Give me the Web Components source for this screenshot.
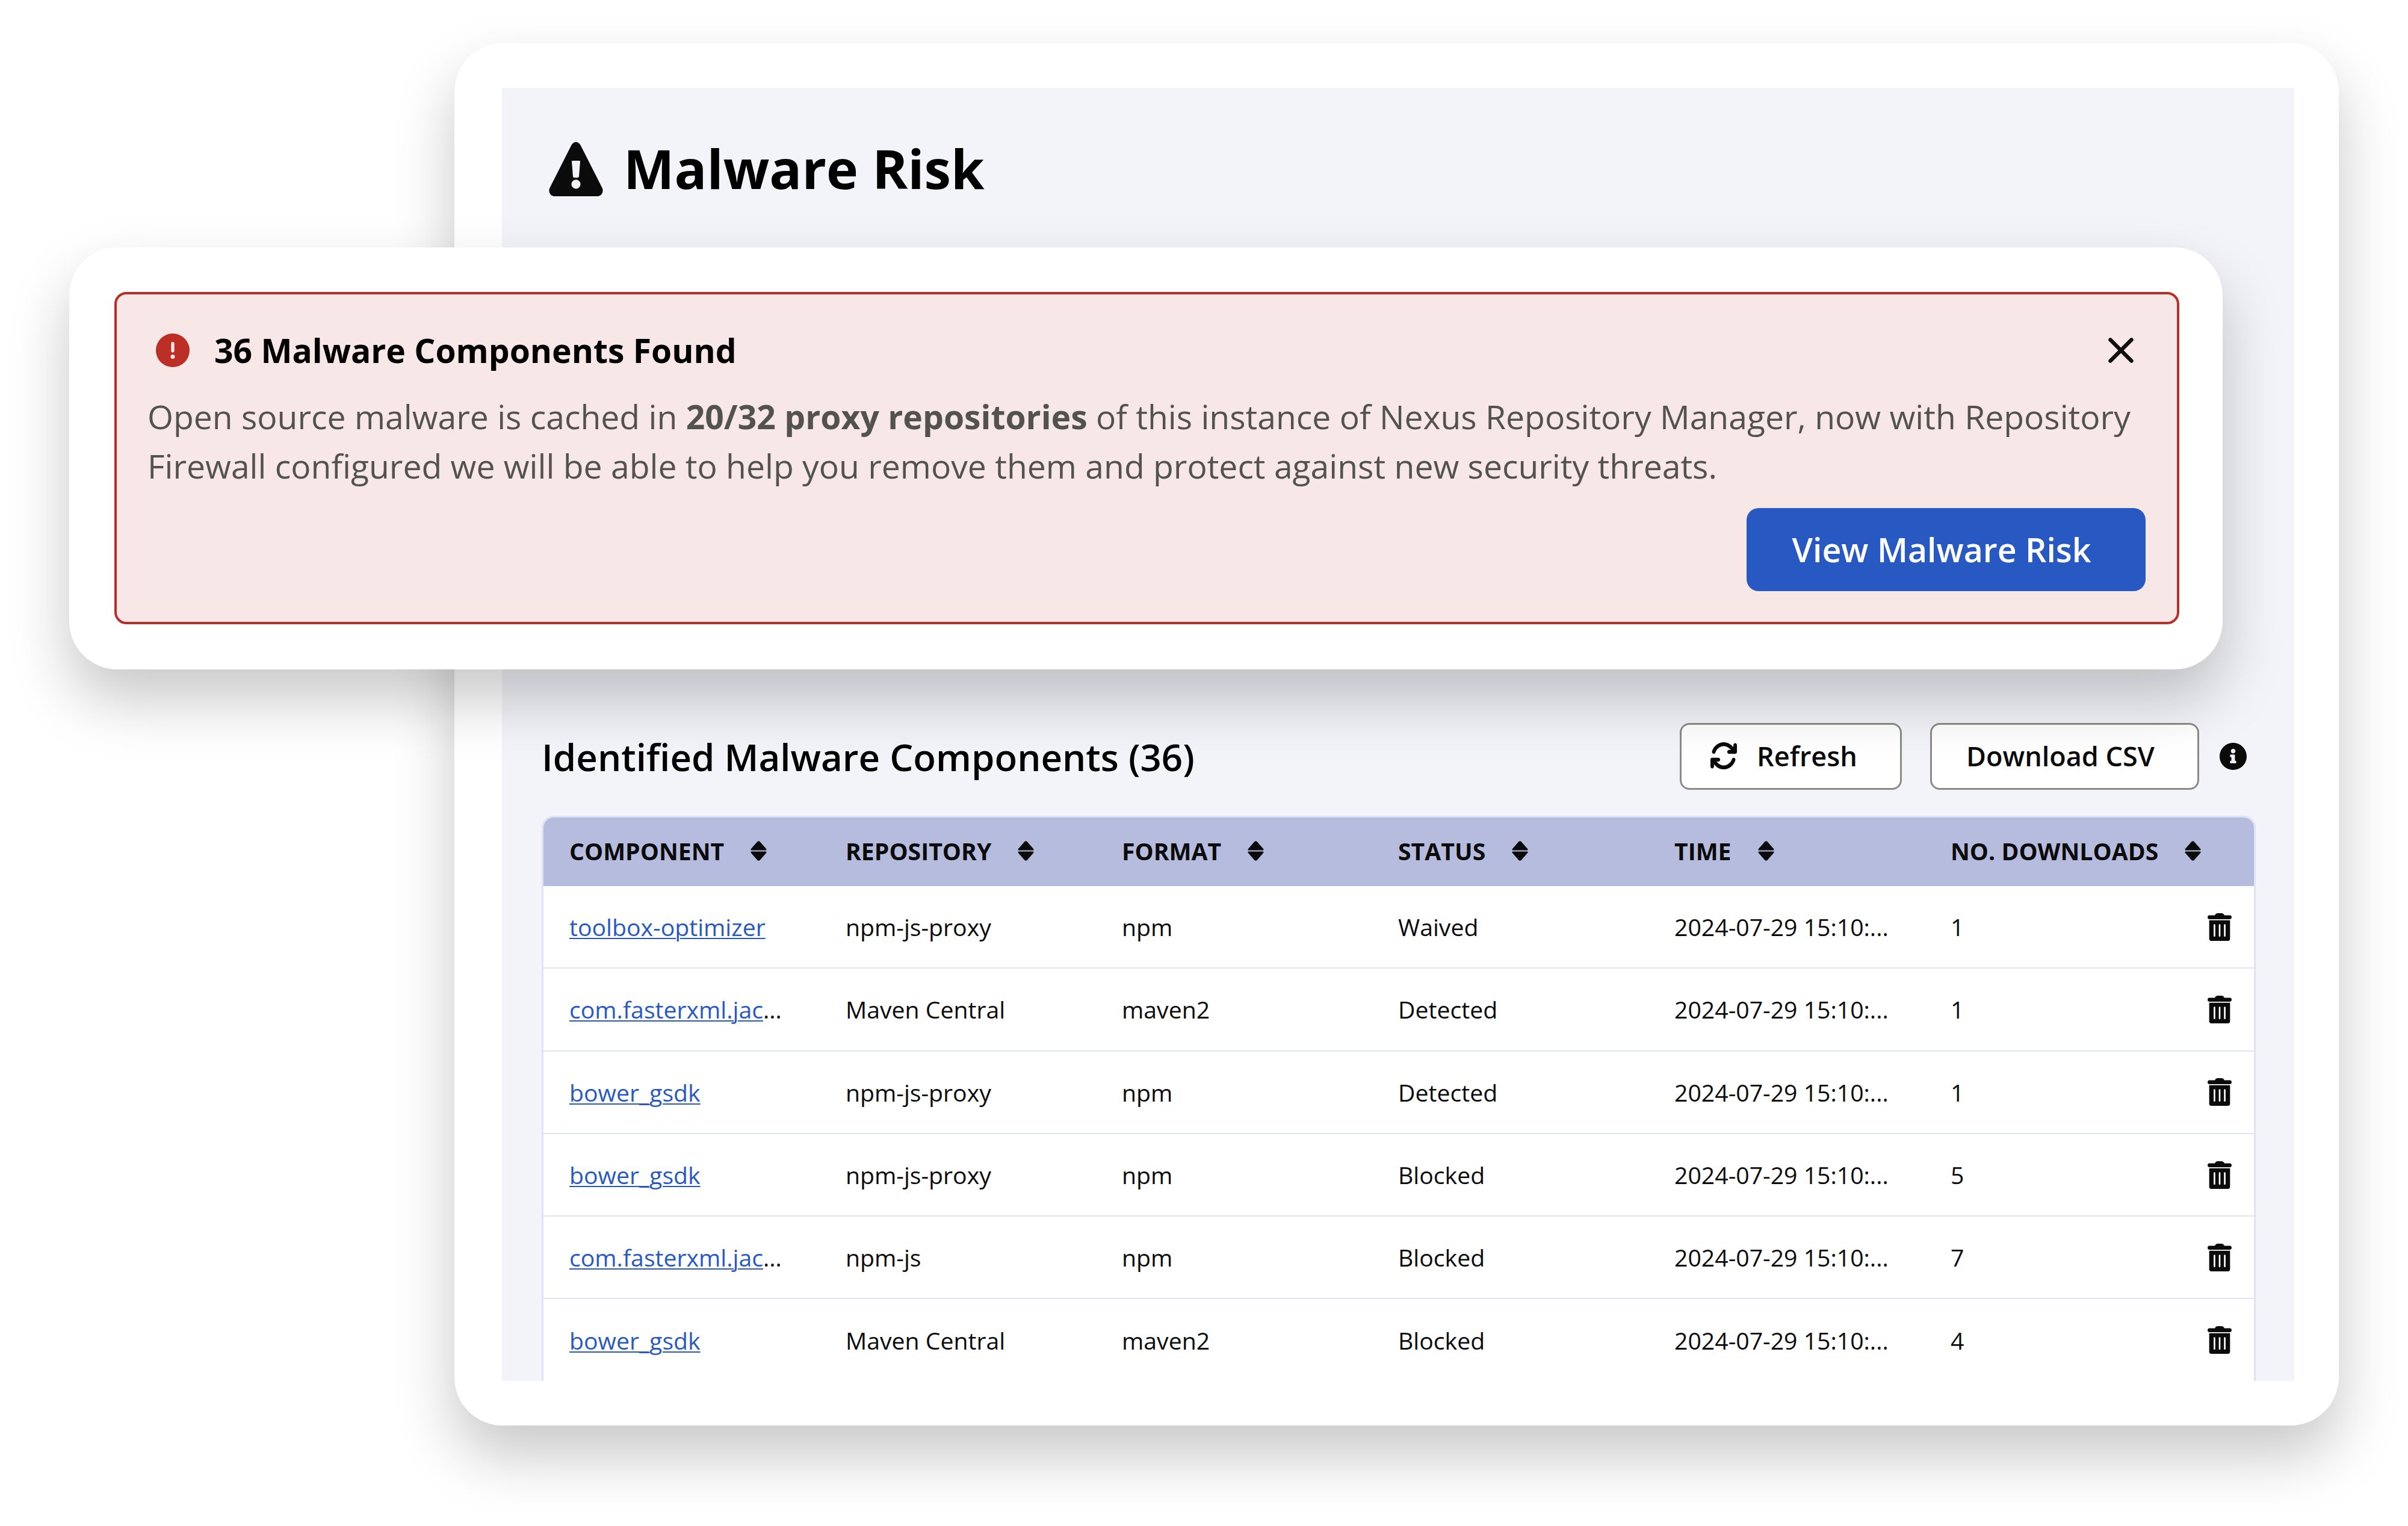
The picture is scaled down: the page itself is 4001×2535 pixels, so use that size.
<!DOCTYPE html>
<html>
<head>
<meta charset="utf-8">
<title>Malware Risk</title>
<style>
  html, body { margin: 0; padding: 0; background: #ffffff; }
  body { width: 4001px; height: 2535px; overflow: hidden; }
</style>
</head>
<body>
<malware-stage>
  <risk-card>
    <risk-title slot="title">Malware Risk</risk-title>
    <table-toolbar slot="toolbar" heading="Identified Malware Components (36)"></table-toolbar>
    <component-table slot="table"></component-table>
  </risk-card>
  <alert-card slot="overlay" heading="36 Malware Components Found" action="View Malware Risk">
    Open source malware is cached in <b>20/32 proxy repositories</b> of this instance of Nexus Repository Manager, now with Repository Firewall configured we will be able to help you remove them and protect against new security threats.
  </alert-card>
</malware-stage>

<script>
const ICONS = {
  warning: {
    box: "0 0 90 90",
    d: "M45 0C48 0 51 2 52.5 5L88.5 76C91.5 82 88 90 81 90H9C2 90-1.5 82 1.5 76L37.5 5C39 2 42 0 45 0ZM39 31H51Q52 31 52 32L50 57Q50 59 48 59H42Q40 59 40 57L38 32Q38 31 39 31ZM45 62.5a7.5 7.5 0 1 0 .01 0Z",
  },
  error: {
    box: "0 0 512 512",
    d: "M256 512A256 256 0 1 0 256 0a256 256 0 1 0 0 512zm0-384c13.3 0 24 10.7 24 24V264c0 13.3-10.7 24-24 24s-24-10.7-24-24V152c0-13.3 10.7-24 24-24zM224 352a32 32 0 1 1 64 0 32 32 0 1 1-64 0z",
  },
  info: {
    box: "8 8 496 496",
    d: "M256 8C119.043 8 8 119.083 8 256c0 136.997 111.043 248 248 248s248-111.003 248-248C504 119.083 392.957 8 256 8zm0 110c23.196 0 42 18.804 42 42s-18.804 42-42 42-42-18.804-42-42 18.804-42 42-42zm56 254c0 6.627-5.373 12-12 12h-88c-6.627 0-12-5.373-12-12v-24c0-6.627 5.373-12 12-12h12v-64h-12c-6.627 0-12-5.373-12-12v-24c0-6.627 5.373-12 12-12h64c6.627 0 12 5.373 12 12v100h12c6.627 0 12 5.373 12 12v24z",
  },
  refresh: {
    box: "16 32 480 448",
    d: "M105.1 202.6c7.7-21.8 20.2-42.3 37.8-59.8c62.5-62.5 163.8-62.5 226.3 0L386.3 160H352c-17.7 0-32 14.3-32 32s14.3 32 32 32H463.5c0 0 0 0 0 0h.4c17.7 0 32-14.3 32-32V80c0-17.7-14.3-32-32-32s-32 14.3-32 32v35.2L414.4 97.6c-87.5-87.5-229.3-87.5-316.8 0C73.2 122 55.6 150.7 44.8 181.4c-5.9 16.7 2.9 34.9 19.5 40.8s34.9-2.9 40.8-19.5zM39 289.3c-5 1.5-9.8 4.2-13.7 8.2c-4 4-6.7 8.8-8.1 14c-.3 1.2-.6 2.5-.8 3.8c-.3 1.7-.4 3.4-.4 5.1V432c0 17.7 14.3 32 32 32s32-14.3 32-32V396.9l17.6 17.5 0 0c87.5 87.4 229.3 87.4 316.7 0c24.4-24.4 42.1-53.1 52.9-83.7c5.9-16.7-2.9-34.9-19.5-40.8s-34.9 2.9-40.8 19.5c-7.7 21.8-20.2 42.3-37.8 59.8c-62.5 62.5-163.8 62.5-226.3 0l-.1-.1L125.6 352H160c17.7 0 32-14.3 32-32s-14.3-32-32-32H48.4c-1.6 0-3.2 .1-4.8 .3s-3.1 .5-4.6 1z",
  },
  trash: {
    box: "0 0 448 512",
    d: "M30 130H418V476C418 496 402 512 382 512H66C46 512 30 496 30 476ZM128 204c-8 0-15 7-15 15V420c0 8 7 15 15 15s15-7 15-15V219c0-8-7-15-15-15zm96 0c-8 0-15 7-15 15V420c0 8 7 15 15 15s15-7 15-15V219c0-8-7-15-15-15zm96 0c-8 0-15 7-15 15V420c0 8 7 15 15 15s15-7 15-15V219c0-8-7-15-15-15zM135 38C145 12 170 0 190 0H258C278 0 303 12 313 38H418C435 38 448 54 448 74S435 111 418 111H30C13 111 0 94 0 74S13 38 30 38Z",
  },
  sort: {
    box: "0 0 27 33",
    d: "M11.5 1Q13.5-.6 15.5 1L26 13Q27.5 15.5 25 15.5H2Q-.5 15.5 1 13ZM11.5 32Q13.5 33.6 15.5 32L26 20Q27.5 17.5 25 17.5H2Q-.5 17.5 1 20Z",
  },
};

class MwIcon extends HTMLElement {
  connectedCallback() {
    const icon = ICONS[this.getAttribute("name")];
    const w = this.getAttribute("w");
    const h = this.getAttribute("h") || w;
    this.attachShadow({ mode: "open" });
    this.shadowRoot.innerHTML = `
      <style>
        :host { display: block; flex: none; width: ${w}px; height: ${h}px; color: inherit; }
        svg { display: block; width: 100%; height: 100%; fill: currentColor; fill-rule: evenodd; }
      </style>
      <svg viewBox="${icon.box}" preserveAspectRatio="none"><path d="${icon.d}"></path></svg>
    `;
  }
}

class MalwareStage extends HTMLElement {
  constructor() {
    super();
    this.attachShadow({ mode: "open" });
    this.shadowRoot.innerHTML = `
      <style>
        :host {
          display: block;
          position: relative;
          width: 4001px;
          height: 2535px;
          overflow: hidden;
          padding: 72px 115px 0 755px;
          box-sizing: border-box;
          font-family: "Open Sans", "Liberation Sans", sans-serif;
        }
        .overlay { position: absolute; left: 115px; top: 411px; }
      </style>
      <slot></slot>
      <div class="overlay"><slot name="overlay"></slot></div>
    `;
  }
}

class RiskCard extends HTMLElement {
  constructor() {
    super();
    this.attachShadow({ mode: "open" });
    this.shadowRoot.innerHTML = `
      <style>
        :host {
          display: block;
          width: 3131px;
          height: 2296px;
          padding: 74px 74px 74px 79px;
          box-sizing: border-box;
          background: #ffffff;
          border-radius: 80px;
          box-shadow: 0 50px 100px rgba(0,0,0,0.22);
        }
        .panel {
          height: 100%;
          background: #f2f4f9;
          overflow: hidden;
          padding: 90px 64px 0 66px;
          box-sizing: border-box;
        }
        .gap { height: 875px; }
        .under { height: 43px; }
      </style>
      <div class="panel">
        <slot name="title"></slot>
        <div class="gap"></div>
        <slot name="toolbar"></slot>
        <div class="under"></div>
        <slot name="table"></slot>
      </div>
    `;
  }
}

class RiskTitle extends HTMLElement {
  constructor() {
    super();
    this.attachShadow({ mode: "open" });
    this.shadowRoot.innerHTML = `
      <style>
        :host {
          display: flex;
          align-items: center;
          gap: 34px;
          height: 90px;
          padding-left: 12px;
          color: #0b0b0b;
        }
        h1 { margin: 0; padding-bottom: 4px; font-size: 89.5px; font-weight: 700; line-height: 90px; color: #000; }
      </style>
      <mw-icon name="warning" w="90"></mw-icon>
      <h1><slot></slot></h1>
    `;
  }
}

class ToolbarButton extends HTMLElement {
  constructor() {
    super();
    this.attachShadow({ mode: "open" });
    this.shadowRoot.innerHTML = `
      <style>
        :host {
          display: flex;
          align-items: center;
          gap: 33px;
          height: 111px;
          padding-bottom: 2px;
          box-sizing: border-box;
          background: #ffffff;
          border: 3px solid #8b8b84;
          border-radius: 16px;
          font-size: 45px;
          font-weight: 600;
          color: #0b0b0b;
        }
      </style>
      <slot></slot>
    `;
  }
}

class TableToolbar extends HTMLElement {
  connectedCallback() {
    this.attachShadow({ mode: "open" });
    this.shadowRoot.innerHTML = `
      <style>
        :host {
          display: flex;
          align-items: center;
          height: 111px;
          padding-right: 15px;
          color: #0b0b0b;
        }
        h2 { margin: 0 auto 0 0; font-size: 61.8px; font-weight: 600; color: #000; }
        .refresh { width: 369px; padding-left: 48px; }
        .download { width: 447px; margin-left: 47px; padding-left: 57px; }
        .info { margin-left: 34px; }
      </style>
      <h2>${this.getAttribute("heading")}</h2>
      <toolbar-button class="refresh"><mw-icon name="refresh" w="44" h="45"></mw-icon>Refresh</toolbar-button>
      <toolbar-button class="download">Download CSV</toolbar-button>
      <mw-icon class="info" name="info" w="45"></mw-icon>
    `;
  }
}

class SortHeader extends HTMLElement {
  constructor() {
    super();
    this.attachShadow({ mode: "open" });
    this.shadowRoot.innerHTML = `
      <style>
        :host {
          display: flex;
          align-items: center;
          gap: 44px;
          font-size: 39.2px;
          font-weight: 700;
          color: #0b0b0b;
          white-space: nowrap;
        }
      </style>
      <slot></slot>
      <mw-icon name="sort" w="27" h="33"></mw-icon>
    `;
  }
}

class ComponentRow extends HTMLElement {
  set data(row) {
    this.attachShadow({ mode: "open" });
    this.shadowRoot.innerHTML = `
      <style>
        :host {
          display: grid;
          grid-template-columns: repeat(5, 459px) 1fr 77px;
          align-items: center;
          height: 137.3px;
          box-sizing: border-box;
          padding-left: 43px;
          margin-left: -43px;
          background: #ffffff;
          border-bottom: 2px solid #dfe3f2;
          font-size: 39.2px;
          color: #0b0b0b;
          white-space: nowrap;
        }
        a { color: #2859c2; text-decoration: underline; text-underline-offset: 3px; text-decoration-thickness: 2px; }
      </style>
      <span><a>${row.name}</a>${row.more ? "..." : ""}</span>
      <span>${row.repo}</span>
      <span>${row.format}</span>
      <span>${row.status}</span>
      <span>${row.time}</span>
      <span>${row.downloads}</span>
      <mw-icon name="trash" w="40" h="46"></mw-icon>
    `;
  }
}

class ComponentTable extends HTMLElement {
  constructor() {
    super();
    this.attachShadow({ mode: "open" });
    const columns = ["COMPONENT", "REPOSITORY", "FORMAT", "STATUS", "TIME", "NO. DOWNLOADS"];
    this.shadowRoot.innerHTML = `
      <style>
        :host {
          display: block;
          background: #ffffff;
          border: 3px solid #dfe3f2;
          border-bottom: 0;
          border-radius: 20px 20px 0 0;
          overflow: hidden;
        }
        .head {
          display: grid;
          grid-template-columns: repeat(5, 459px) 1fr;
          align-items: center;
          height: 114px;
          padding: 0 0 3px 43px;
          box-sizing: border-box;
          background: #b6bcde;
        }
        .rows { padding-left: 43px; }
      </style>
      <div class="head">
        ${columns.map((c) => `<sort-header>${c}</sort-header>`).join("")}
      </div>
      <div class="rows"></div>
    `;
    const time = "2024-07-29 15:10:...";
    const rows = [
      { name: "toolbox-optimizer", repo: "npm-js-proxy", format: "npm", status: "Waived", downloads: 1 },
      { name: "com.fasterxml.jac", more: true, repo: "Maven Central", format: "maven2", status: "Detected", downloads: 1 },
      { name: "bower_gsdk", repo: "npm-js-proxy", format: "npm", status: "Detected", downloads: 1 },
      { name: "bower_gsdk", repo: "npm-js-proxy", format: "npm", status: "Blocked", downloads: 5 },
      { name: "com.fasterxml.jac", more: true, repo: "npm-js", format: "npm", status: "Blocked", downloads: 7 },
      { name: "bower_gsdk", repo: "Maven Central", format: "maven2", status: "Blocked", downloads: 4 },
    ];
    const host = this.shadowRoot.querySelector(".rows");
    rows.forEach((r) => {
      const el = document.createElement("component-row");
      el.data = { ...r, time };
      host.appendChild(el);
    });
  }
}

class AlertCard extends HTMLElement {
  connectedCallback() {
    this.attachShadow({ mode: "open" });
    this.shadowRoot.innerHTML = `
      <style>
        :host {
          display: block;
          width: 3578px;
          height: 701px;
          padding: 74px 72px 74px 75px;
          box-sizing: border-box;
          background: #ffffff;
          border-radius: 80px;
          box-shadow: 0 50px 100px rgba(0,0,0,0.22);
        }
        .alert {
          height: 552px;
          padding: 53px 52px 0 51px;
          box-sizing: border-box;
          background: #f8e7e7;
          border: 4px solid #b5302a;
          border-radius: 20px;
        }
        .top { display: flex; align-items: center; height: 80px; }
        .mark { color: #bc2f26; margin-left: 14px; margin-right: 41px; }
        h3 { margin: 0; padding-bottom: 2px; font-size: 55.2px; font-weight: 700; color: #000; }
        .close { margin-left: auto; margin-right: 20px; width: 42px; height: 42px; display: block; }
        .text {
          margin: 29px 0 0;
          font-size: 55.25px;
          line-height: 82px;
          color: #53534e;
        }
        .actions { display: flex; justify-content: flex-end; margin-top: 29px; }
        .cta {
          display: flex;
          align-items: center;
          justify-content: center;
          width: 663px;
          height: 138px;
          padding: 0 15px 2px 0;
          box-sizing: border-box;
          background: #2859c2;
          color: #ffffff;
          border-radius: 20px;
          font-size: 55.4px;
          font-weight: 600;
        }
      </style>
      <div class="alert">
        <div class="top">
          <mw-icon class="mark" name="error" w="56"></mw-icon>
          <h3>${this.getAttribute("heading")}</h3>
          <svg class="close" viewBox="0 0 42 42"><path d="M3.5 3.5L38.5 38.5M38.5 3.5L3.5 38.5" stroke="#0f0f0e" stroke-width="6.5" stroke-linecap="round" fill="none"></path></svg>
        </div>
        <p class="text"><slot></slot></p>
        <div class="actions"><div class="cta">${this.getAttribute("action")}</div></div>
      </div>
    `;
  }
}

customElements.define("mw-icon", MwIcon);
customElements.define("malware-stage", MalwareStage);
customElements.define("risk-card", RiskCard);
customElements.define("risk-title", RiskTitle);
customElements.define("toolbar-button", ToolbarButton);
customElements.define("table-toolbar", TableToolbar);
customElements.define("sort-header", SortHeader);
customElements.define("component-row", ComponentRow);
customElements.define("component-table", ComponentTable);
customElements.define("alert-card", AlertCard);
</script>
</body>
</html>
